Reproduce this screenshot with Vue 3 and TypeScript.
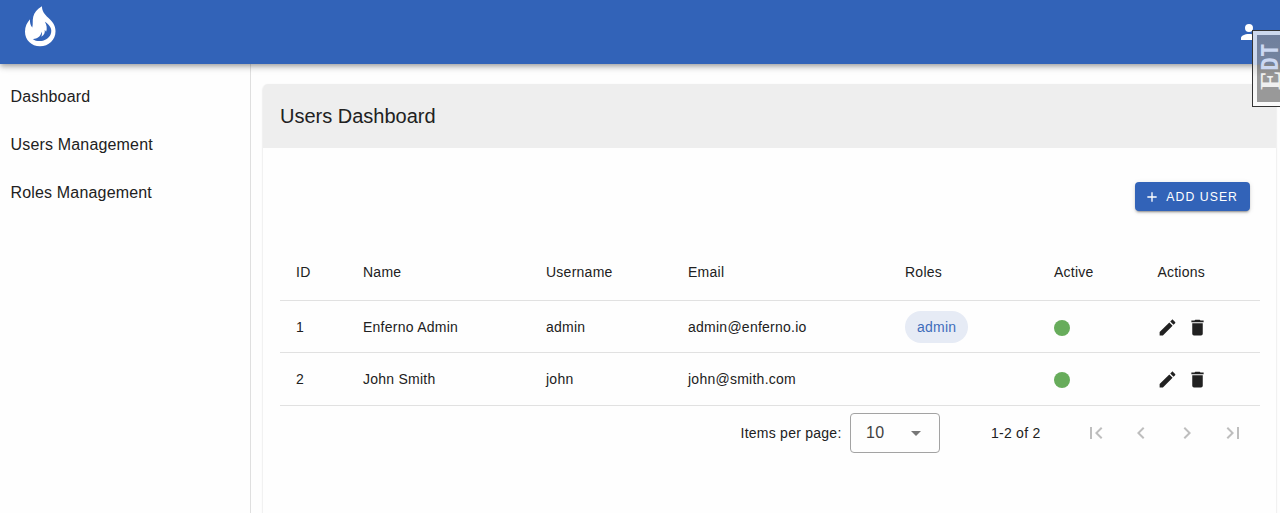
<script setup lang="ts">
interface User {
  id: number
  name: string
  username: string
  email: string
  roles: string[]
}

const links: string[] = ['Dashboard', 'Users Management', 'Roles Management']
const headers: string[] = ['ID', 'Name', 'Username', 'Email', 'Roles', 'Active', 'Actions']
const users: User[] = [
  { id: 1, name: 'Enferno Admin', username: 'admin', email: 'admin@enferno.io', roles: ['admin'] },
  { id: 2, name: 'John Smith', username: 'john', email: 'john@smith.com', roles: [] },
]
const pagers: string[] = [
  'M18.41,16.59L13.82,12L18.41,7.41L17,6L11,12L17,18L18.41,16.59M6,6H8V18H6V6Z',
  'M15.41,16.58L10.83,12L15.41,7.41L14,6L8,12L14,18L15.41,16.58Z',
  'M8.59,16.58L13.17,12L8.59,7.41L10,6L16,12L10,18L8.59,16.58Z',
  'M5.59,7.41L10.18,12L5.59,16.59L7,18L13,12L7,6L5.59,7.41M16,6H18V18H16V6Z',
]
</script>

<template>
  <div class="app">
    <header class="bar">
      <svg class="logo" viewBox="0 0 32 42">
        <path fill="#fff" d="M17.500 0C17.500 5 20 8 24 12C28.500 16 31.500 20 31.500 26C31.500 35 24.500 41.500 15.500 41.500C6.500 41.500 0 35 0 26.500C0 21 2 17 5.200 13.500C5 17 5.500 19.500 7.500 22C8.500 18 7.500 15 8.500 11C9.500 6.500 12.500 3 17.500 0Z" />
        <path fill="#3263b8" d="M20.500 16C26 19.500 28.500 24 26.500 29C24 35.500 14 38.500 8 33.800C12 34 15.500 32.500 17.300 26.500C17.800 28.500 17.500 30 16.800 31.500C20.200 29.500 20.800 27 20.300 24.500C21.200 25 21.500 25.800 21.800 26.500C23 23 22.500 19.500 20.500 16Z" />
      </svg>
      <svg class="account" viewBox="0 0 24 24"><path d="M12,4A4,4 0 0,1 16,8A4,4 0 0,1 12,12A4,4 0 0,1 8,8A4,4 0 0,1 12,4M12,14C16.42,14 20,15.79 20,18V20H4V18C4,15.79 7.58,14 12,14Z" /></svg>
    </header>
    <div class="body">
      <nav class="side">
        <a v-for="link in links" :key="link">{{ link }}</a>
      </nav>
      <main class="main">
        <section class="card">
          <h1>Users Dashboard</h1>
          <div class="tools">
            <button class="add">
              <svg viewBox="0 0 24 24"><path d="M19,13H13V19H11V13H5V11H11V5H13V11H19V13Z" /></svg>
              <span>ADD USER</span>
            </button>
          </div>
          <div class="table">
            <div class="row head">
              <span v-for="h in headers" :key="h">{{ h }}</span>
            </div>
            <div v-for="u in users" :key="u.id" class="row">
              <span>{{ u.id }}</span>
              <span>{{ u.name }}</span>
              <span>{{ u.username }}</span>
              <span>{{ u.email }}</span>
              <span><b v-for="r in u.roles" :key="r" class="chip">{{ r }}</b></span>
              <span><i class="dot"></i></span>
              <span class="actions">
                <svg viewBox="0 0 24 24"><path d="M20.71,7.04C21.1,6.65 21.1,6 20.71,5.63L18.37,3.29C18,2.9 17.35,2.9 16.96,3.29L15.12,5.12L18.87,8.87M3,17.25V21H6.75L17.81,9.93L14.06,6.18L3,17.25Z" /></svg>
                <svg viewBox="0 0 24 24"><path d="M19,4H15.5L14.5,3H9.5L8.5,4H5V6H19M6,19A2,2 0 0,0 8,21H16A2,2 0 0,0 18,19V7H6V19Z" /></svg>
              </span>
            </div>
          </div>
          <footer class="foot">
            <span class="per">Items per page:</span>
            <div class="select">
              <span>10</span>
              <svg viewBox="0 0 24 24"><path d="M7,10L12,15L17,10H7Z" /></svg>
            </div>
            <span class="info">1-2 of 2</span>
            <div class="pages">
              <svg v-for="p in pagers" :key="p" viewBox="0 0 24 24"><path :d="p" /></svg>
            </div>
          </footer>
        </section>
      </main>
    </div>
    <div class="edt"><div class="edt-in"><span class="edt-text"><em>E</em>DT</span></div></div>
  </div>
</template>

<style>
body { margin: 0; background: #fefefe; }
</style>

<style scoped>
.app {
  position: relative;
  width: 1280px;
  height: 513px;
  overflow: hidden;
  display: flex;
  flex-direction: column;
  background: #fefefe;
  color: #212121;
  font-family: "Liberation Sans", Arial, sans-serif;
  font-size: 14px;
  letter-spacing: 0.25px;
}
.bar {
  flex: none;
  height: 64px;
  box-sizing: border-box;
  padding: 6px 21px 0 25px;
  display: flex;
  justify-content: space-between;
  align-items: flex-start;
  background: #3263b8;
  box-shadow: 0 2px 4px -1px rgba(0, 0, 0, 0.2), 0 4px 5px rgba(0, 0, 0, 0.14), 0 1px 10px rgba(0, 0, 0, 0.12);
  z-index: 1;
}
.logo { width: 31px; height: 41px; }
.account { width: 24px; height: 24px; margin: 14px -2px 0 0; fill: #fff; }
.body { flex: 1; display: flex; min-height: 0; }
.side {
  width: 250px;
  flex: none;
  border-right: 1px solid #dfdfdf;
  padding-top: 9px;
}
.side a {
  display: block;
  height: 48px;
  line-height: 48px;
  padding-left: 10.5px;
  font-size: 16px;
  letter-spacing: 0.17px;
}
.main { flex: 1; padding: 20px 4px 0 12px; min-width: 0; }
.card {
  height: 520px;
  border-radius: 5px 5px 0 0;
  box-shadow: 0 1px 2px rgba(0, 0, 0, 0.2);
  background: #fefefe;
}
h1 {
  margin: 0;
  height: 64px;
  line-height: 65px;
  padding-left: 17px;
  border-radius: 5px 5px 0 0;
  background: #eeeeee;
  font-size: 20px;
  font-weight: 400;
  letter-spacing: 0;
}
.tools { height: 96px; box-sizing: border-box; padding: 34px 26px 0 0; display: flex; justify-content: flex-end; align-items: flex-start; }
.add {
  width: 115px;
  height: 29px;
  padding: 0 0 0 9px;
  border: 0;
  border-radius: 4px;
  display: flex;
  align-items: center;
  background: #3263b8;
  color: #fff;
  font: 12.25px "Liberation Sans", Arial, sans-serif;
  letter-spacing: 1.05px;
  box-shadow: 0 3px 1px -2px rgba(0, 0, 0, 0.2), 0 2px 2px rgba(0, 0, 0, 0.14), 0 1px 5px rgba(0, 0, 0, 0.12);
}
.add svg { width: 16px; height: 16px; margin-right: 6.3px; fill: #fff; }
.table { margin: 0 16px 0 17px; }
.row {
  display: grid;
  grid-template-columns: 67px 183px 142px 217px 149px 103.4px 1fr;
  align-items: center;
  height: 52px;
  padding-left: 16px;
  border-bottom: 1px solid #e1e1e1;
}
.row.head { height: 56px; }
.row:nth-child(2) { height: 51px; }
.chip {
  display: inline-flex;
  align-items: center;
  height: 32px;
  padding: 0 12px;
  border-radius: 16px;
  background: #e6ebf5;
  color: #3f6dbb;
  font-weight: 400;
}
.dot { display: block; width: 16px; height: 16px; margin-top: 2px; border-radius: 50%; background: #67ac5b; }
.actions { display: flex; gap: 8.5px; padding-top: 1px; }
.actions svg { width: 21px; height: 21px; fill: #212121; }
.foot { display: flex; align-items: center; height: 54px; padding-left: 477.5px; }
.per { width: 109.5px; flex: none; }
.select {
  flex: none;
  box-sizing: border-box;
  width: 90px;
  height: 40px;
  display: flex;
  align-items: center;
  justify-content: space-between;
  padding: 0 11px 0 15px;
  border: 1px solid #a3a3a3;
  border-radius: 4px;
  font-size: 16px;
  color: #424242;
}
.select svg { width: 24px; height: 24px; fill: #777; }
.info { width: 92.5px; flex: none; margin-left: 51px; }
.pages { display: flex; gap: 21.8px; }
.pages svg { width: 24px; height: 24px; fill: #bebebe; }
.edt {
  position: absolute;
  z-index: 2;
  left: 1252px;
  top: 30px;
  width: 28px;
  height: 75px;
  border: 1px solid #333;
  border-right: 0;
  box-sizing: content-box;
  background: linear-gradient(#ccd8ed 0, #ccd8ed 34px, #ddd 34px, #f4f4f4 46px, #fafafa 75px);
}
.edt-in {
  margin: 4px 0 0 4px;
  height: 67px;
  display: flex;
  align-items: flex-end;
  background: linear-gradient(#6f7f9d 0, #75849f 29px, #858585 30px, #999 42px);
}
.edt-text {
  flex: none;
  height: 54px;
  width: 23px;
  box-sizing: border-box;
  margin: 0 0 12px 1.5px;
  writing-mode: vertical-rl;
  transform: rotate(180deg);
  white-space: nowrap;
  font: bold 22.5px/23px "DejaVu Sans Mono", monospace;
  letter-spacing: 0;
  color: #ccd8f2;
}
.edt-text em { font-style: normal; font-family: "Liberation Serif", serif; font-size: 29px; line-height: 23px; color: #f0f0f0; }
</style>
